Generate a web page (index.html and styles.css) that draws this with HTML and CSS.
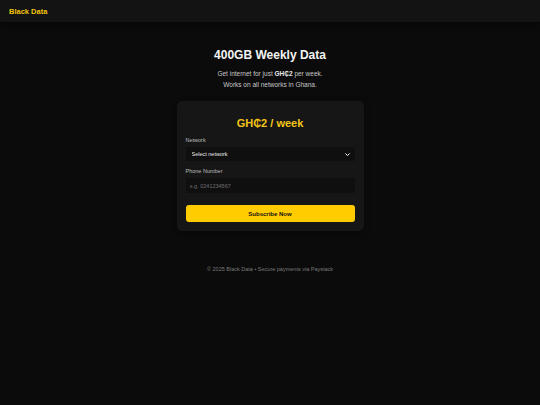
FILE: index.html
```html
<!DOCTYPE html>
<html lang="en">
<head>
    <meta charset="UTF-8">
    <meta name="viewport" content="width=device-width, initial-scale=1.0">
    <title>Black Data</title>
    <link rel="stylesheet" href="styles.css">
</head>
<body>
<header class="topbar">
    <span class="brand">Black Data</span>
</header>

<main class="main">
    <h1>400GB Weekly Data</h1>
    <p class="intro">Get internet for just <strong>GH₵2</strong> per week.<br>Works on all networks in Ghana.</p>

    <form class="card">
        <div class="price">GH₵2 / week</div>

        <label class="label" for="network">Network</label>
        <div class="select-wrap">
            <select id="network" class="field select">
                <option>Select network</option>
                <option>MTN</option>
                <option>Vodafone</option>
                <option>AirtelTigo</option>
            </select>
            <svg class="chevron" viewBox="0 0 10 6" width="5" height="3"><path d="M1 1l4 4 4-4" fill="none" stroke="#fff" stroke-width="2"/></svg>
        </div>

        <label class="label" for="phone">Phone Number</label>
        <input id="phone" class="field input" type="tel" placeholder="e.g. 0241234567">

        <button type="submit" class="btn">Subscribe Now</button>
    </form>

    <p class="footer">© 2025 Black Data • Secure payments via Paystack</p>
</main>
</body>
</html>
```

FILE: styles.css
```css
* {
    margin: 0;
    padding: 0;
    box-sizing: border-box;
    font-family: "Liberation Sans", Arial, sans-serif;
}

body {
    background-color: #0b0b0b;
    color: #fff;
    min-height: 100vh;
}

.topbar {
    height: 22px;
    background-color: #131313;
    box-shadow: 0 2px 6px rgba(0, 0, 0, 0.5);
    display: flex;
    align-items: center;
    padding: 0 9px;
}

.brand {
    color: #f2c40c;
    font-size: 7.5px;
    font-weight: 700;
}

.main {
    display: flex;
    flex-direction: column;
    align-items: center;
    padding-top: 26px;
}

h1 {
    font-size: 12px;
    font-weight: 700;
    color: #f4f4f4;
    line-height: 15px;
}

.intro {
    margin-top: 5px;
    font-size: 6.5px;
    line-height: 11px;
    color: #c8c8c8;
    text-align: center;
}

.intro strong {
    color: #e8e8e8;
}

.card {
    margin-top: 11px;
    width: 187px;
    background-color: #161616;
    border-radius: 5px;
    padding: 15px 9px 9px;
    display: flex;
    flex-direction: column;
    box-shadow: 0 2px 6px rgba(0, 0, 0, 0.4);
}

.price {
    text-align: center;
    color: #f5c518;
    font-size: 11px;
    font-weight: 700;
    line-height: 14px;
    margin-bottom: 7px;
}

.label {
    font-size: 5.5px;
    line-height: 6px;
    color: #bdbdbd;
    margin-bottom: 4px;
}

.select-wrap {
    position: relative;
    margin-bottom: 7px;
}

.field {
    display: block;
    width: 100%;
    height: 14px;
    background-color: #0f0f0f;
    border: none;
    border-radius: 2px;
    color: #e8e8e8;
    font-size: 5.5px;
    padding: 0 4px;
    outline: none;
}

.select {
    appearance: none;
    -webkit-appearance: none;
    padding: 0 6px;
}

.chevron {
    position: absolute;
    right: 5px;
    top: 6px;
}

.input {
    height: 15px;
    margin-bottom: 12px;
}

.input::placeholder {
    color: #6f6f6f;
}

.btn {
    height: 17px;
    background-color: #ffcc00;
    color: #111;
    border: none;
    border-radius: 3px;
    font-size: 6px;
    font-weight: 700;
    cursor: pointer;
}

.footer {
    margin-top: 35px;
    font-size: 5.5px;
    color: #7a7a7a;
}
```
